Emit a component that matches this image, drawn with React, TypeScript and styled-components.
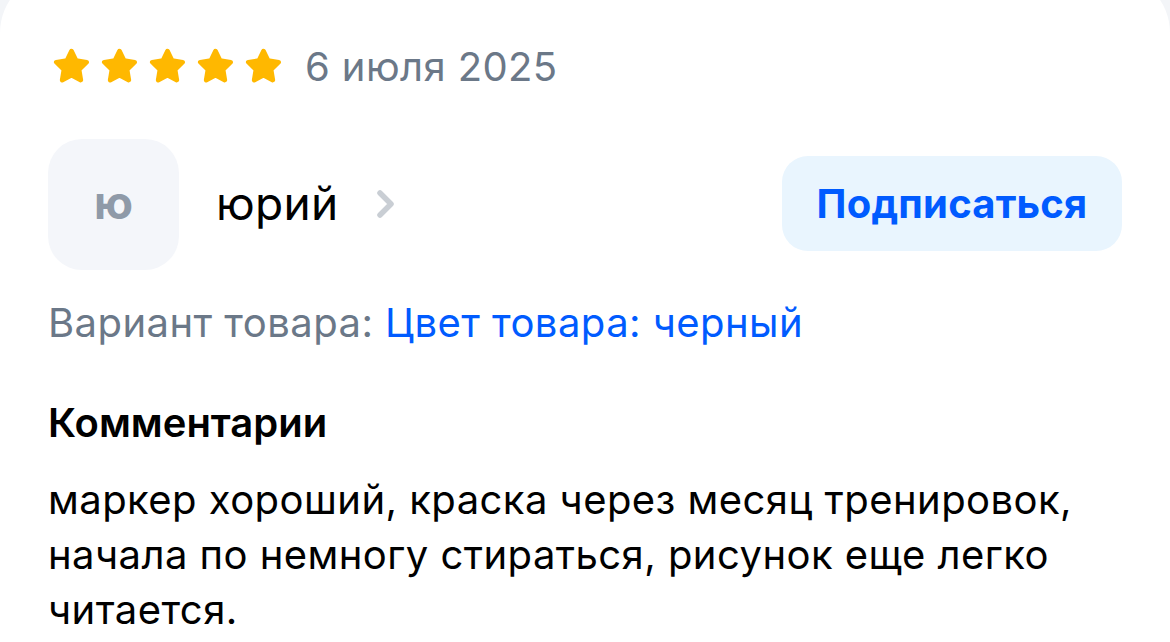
import React from "react";
import styled, { createGlobalStyle } from "styled-components";

const Global = createGlobalStyle`
  html, body { margin: 0; padding: 0; background: #f3f5f8; }
  body { font-family: Inter, "Noto Sans", sans-serif; -webkit-font-smoothing: antialiased; }
  #root { width: 1170px; height: 642px; overflow: hidden; }
`;

const Card = styled.div`
  margin-top: -27px;
  background: #ffffff;
  border-radius: 60px 60px 0 0;
  min-height: 700px;
  padding: 75px 48px 0 48px;
  box-sizing: border-box;
`;

const RatingRow = styled.div`
  display: flex;
  align-items: center;
  height: 36px;
  gap: 23px;
`;

const Stars = styled.div`
  display: flex;
  gap: 11px;
  padding-left: 5px;
`;

const DateText = styled.span`
  font-size: 40px;
  letter-spacing: 0.4px;
  color: #6b7888;
  line-height: 1;
  margin-top: 1px;
`;

const AuthorRow = styled.div`
  display: flex;
  align-items: center;
  margin-top: 55px;
`;

const Avatar = styled.div`
  width: 131px;
  height: 131px;
  border-radius: 34px;
  background: #f4f6fa;
  display: flex;
  align-items: center;
  justify-content: center;
  font-weight: 700;
  font-size: 45px;
  color: #8f9aa8;
  padding-bottom: 4px;
  box-sizing: border-box;
`;

const Name = styled.span`
  margin-left: 37px;
  font-size: 46px;
  letter-spacing: 0.3px;
  color: #000;
  margin-bottom: 4px;
`;

const Chevron = styled.svg`
  margin-left: 36px;
  margin-bottom: 2px;
`;

const Spacer = styled.div`
  flex: 1;
`;

const SubscribeButton = styled.button`
  width: 340px;
  height: 95px;
  margin-top: -2px;
  border: none;
  border-radius: 26px;
  background: #e9f5fe;
  color: #005bff;
  font-family: inherit;
  font-weight: 700;
  font-size: 40px;
  letter-spacing: 0.2px;
  padding: 0;
`;

const Variant = styled.div`
  margin-top: 26px;
  font-size: 40px;
  letter-spacing: 0.45px;
  line-height: 54px;
  color: #6b7888;
`;

const Link = styled.span`
  color: #005bff;
`;

const Heading = styled.div`
  margin-top: 46px;
  font-size: 40px;
  font-weight: 600;
  line-height: 54px;
  color: #000;
`;

const Body = styled.p`
  margin: 22px 0 0 0;
  font-size: 40px;
  letter-spacing: 0.45px;
  line-height: 55px;
  color: #000;
  max-width: 1070px;
`;

const Star = () => (
  <svg width="37" height="36" viewBox="0 0 36 35">
    <path
      d="M18 3 L22.6 12.3 L32.8 13.8 L25.4 21 L27.1 31.2 L18 26.4 L8.9 31.2 L10.6 21 L3.2 13.8 L13.4 12.3 Z"
      fill="#ffb800"
      stroke="#ffb800"
      strokeWidth="4.5"
      strokeLinejoin="round"
    />
  </svg>
);

export default function App() {
  return (
    <>
      <Global />
      <Card>
        <RatingRow>
          <Stars>
            {[0, 1, 2, 3, 4].map((i) => (
              <Star key={i} />
            ))}
          </Stars>
          <DateText>6 июля 2025</DateText>
        </RatingRow>
        <AuthorRow>
          <Avatar>ю</Avatar>
          <Name>юрий</Name>
          <Chevron width="22" height="32" viewBox="0 0 22 32">
            <path d="M5 5 L16 16 L5 27" fill="none" stroke="#c9ced4" strokeWidth="5.5" strokeLinecap="round" strokeLinejoin="round" />
          </Chevron>
          <Spacer />
          <SubscribeButton>Подписаться</SubscribeButton>
        </AuthorRow>
        <Variant>
          Вариант товара: <Link>Цвет товара: черный</Link>
        </Variant>
        <Heading>Комментарии</Heading>
        <Body>
          маркер хороший, краска через месяц тренировок, начала по немногу стираться, рисунок еще легко читается.
        </Body>
      </Card>
    </>
  );
}
